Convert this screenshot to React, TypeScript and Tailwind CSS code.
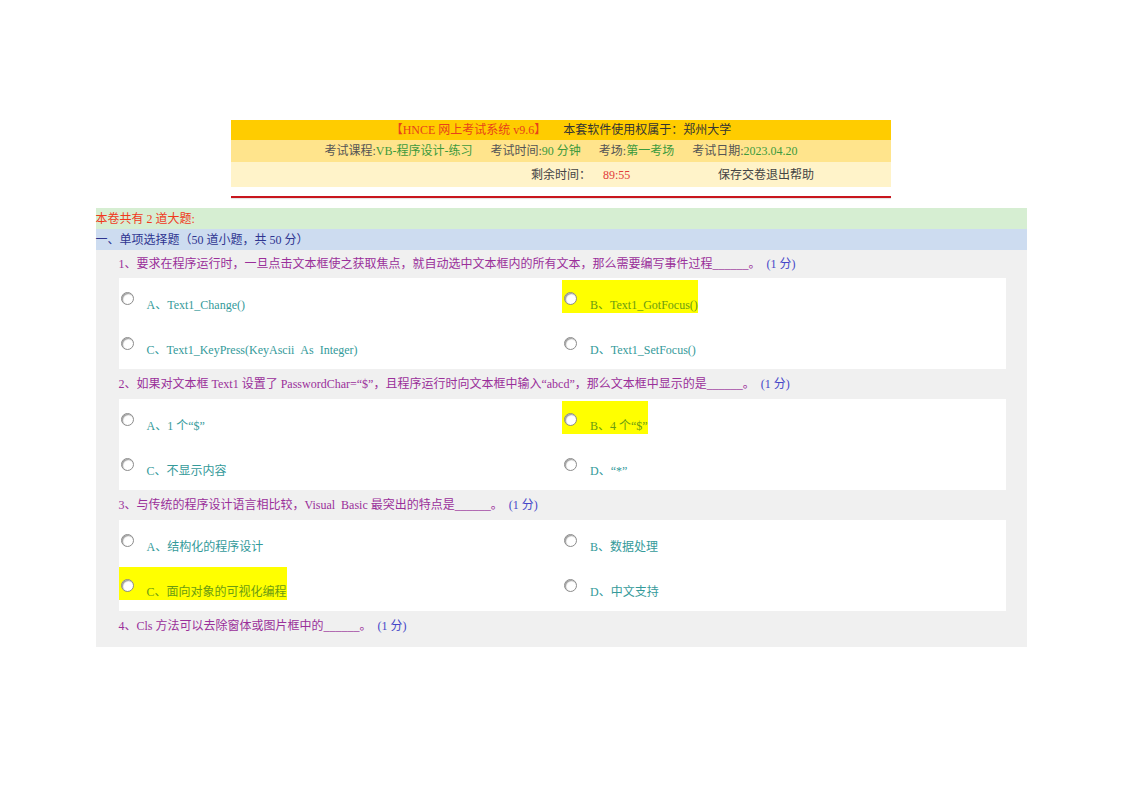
const font = { fontFamily: '"Liberation Serif", "Noto Sans CJK SC", serif' };

type Opt = { label: string; hl?: boolean };

const questions: { no: number; text: string; opts: Opt[] }[] = [
  {
    no: 1,
    text: "1、要求在程序运行时，一旦点击文本框使之获取焦点，就自动选中文本框内的所有文本，那么需要编写事件过程______。",
    opts: [
      { label: "A、Text1_Change()" },
      { label: "B、Text1_GotFocus()", hl: true },
      { label: "C、Text1_KeyPress(KeyAscii\u00a0\u00a0As\u00a0\u00a0Integer)" },
      { label: "D、Text1_SetFocus()" },
    ],
  },
  {
    no: 2,
    text: "2、如果对文本框 Text1 设置了 PasswordChar=“$”，且程序运行时向文本框中输入“abcd”，那么文本框中显示的是______。",
    opts: [
      { label: "A、1 个“$”" },
      { label: "B、4 个“$”", hl: true },
      { label: "C、不显示内容" },
      { label: "D、“*”" },
    ],
  },
  {
    no: 3,
    text: "3、与传统的程序设计语言相比较，Visual\u00a0\u00a0Basic 最突出的特点是______。",
    opts: [
      { label: "A、结构化的程序设计" },
      { label: "B、数据处理" },
      { label: "C、面向对象的可视化编程", hl: true },
      { label: "D、中文支持" },
    ],
  },
];

function Radio() {
  return (
    <span className="mt-[12px] block h-[13px] w-[13px] shrink-0 rounded-full border border-[#8c8c8c] bg-[radial-gradient(circle_at_60%_60%,#ffffff_45%,#d8d8d8_100%)] shadow-[inset_1px_1px_1px_rgba(0,0,0,0.35)]" />
  );
}

function Option({ opt }: { opt: Opt }) {
  return (
    <div>
      <span className={`inline-flex h-[33px] items-start pl-[2px] ${opt.hl ? "bg-[#ffff00]" : ""}`}>
        <Radio />
        <span
          className={`ml-[13px] mt-[18px] whitespace-pre text-[12px] leading-[14px] ${
            opt.hl ? "text-[#6b9c12]" : "text-[#349a9a]"
          }`}
        >
          {opt.label}
        </span>
      </span>
    </div>
  );
}

function QuestionText({ text, first }: { text: string; first?: boolean }) {
  return (
    <div className={`flex items-center text-[12px] text-[#9a2f9a] ${first ? "h-[28px]" : "h-[30px]"}`}>
      <span className="whitespace-pre">{text}</span>
      <span className="ml-[6px] text-[#4646c8]">(1 分)</span>
    </div>
  );
}

export default function App() {
  return (
    <div className="min-h-[793px] bg-white pt-[120px]" style={font}>
      <div className="mx-auto w-[660px] text-[12px]">
        <div className="flex h-[20px] items-center justify-center gap-[17px] bg-[#ffcc00]">
          <span className="text-[#e8421a]">【HNCE 网上考试系统 v9.6】</span>
          <span className="text-[#333333]">本套软件使用权属于：郑州大学</span>
        </div>
        <div className="flex h-[22px] items-center justify-center gap-[18px] bg-[#ffe48c] text-[#555555]">
          <span>
            考试课程:<span className="text-[#3d9a3d]">VB-程序设计-练习</span>
          </span>
          <span>
            考试时间:<span className="text-[#3d9a3d]">90 分钟</span>
          </span>
          <span>
            考场:<span className="text-[#3d9a3d]">第一考场</span>
          </span>
          <span>
            考试日期:<span className="text-[#3d9a3d]">2023.04.20</span>
          </span>
        </div>
        <div className="flex h-[25px] items-center bg-[#fff3c9] pl-[300px] text-[#444444]">
          <span className="w-[72px]">剩余时间：</span>
          <span className="w-[115px] text-[#e23b3b]">89:55</span>
          <span>保存交卷退出帮助</span>
        </div>
        <div className="mt-[9px] h-[2px] bg-[#c8161d] shadow-[0_1px_1px_rgba(0,0,0,0.12)]" />
      </div>

      <div className="mx-auto mt-[10px] w-[931px] text-[12px]">
        <div className="flex h-[21px] items-center bg-[#d6eed2] text-[#f0391c]">本卷共有 2 道大题:</div>
        <div className="flex h-[21px] items-center bg-[#cddcf0] text-[#2f3590]">
          一、单项选择题（50 道小题，共 50 分）
        </div>
        <div className="bg-[#f0f0f0] pb-[6px] pl-[23px] pr-[21px]">
          {questions.map((q) => (
            <div key={q.no}>
              <QuestionText text={q.text} first={q.no === 1} />
              <div className="grid grid-cols-2 gap-y-[12px] bg-white pb-[11px] pt-[2px]">
                {q.opts.map((o) => (
                  <Option key={o.label} opt={o} />
                ))}
              </div>
            </div>
          ))}
          <div className="flex h-[30px] items-center text-[12px] text-[#9a2f9a]">
            <span>4、Cls 方法可以去除窗体或图片框中的______。</span>
            <span className="ml-[6px] text-[#4646c8]">(1 分)</span>
          </div>
        </div>
      </div>
    </div>
  );
}
